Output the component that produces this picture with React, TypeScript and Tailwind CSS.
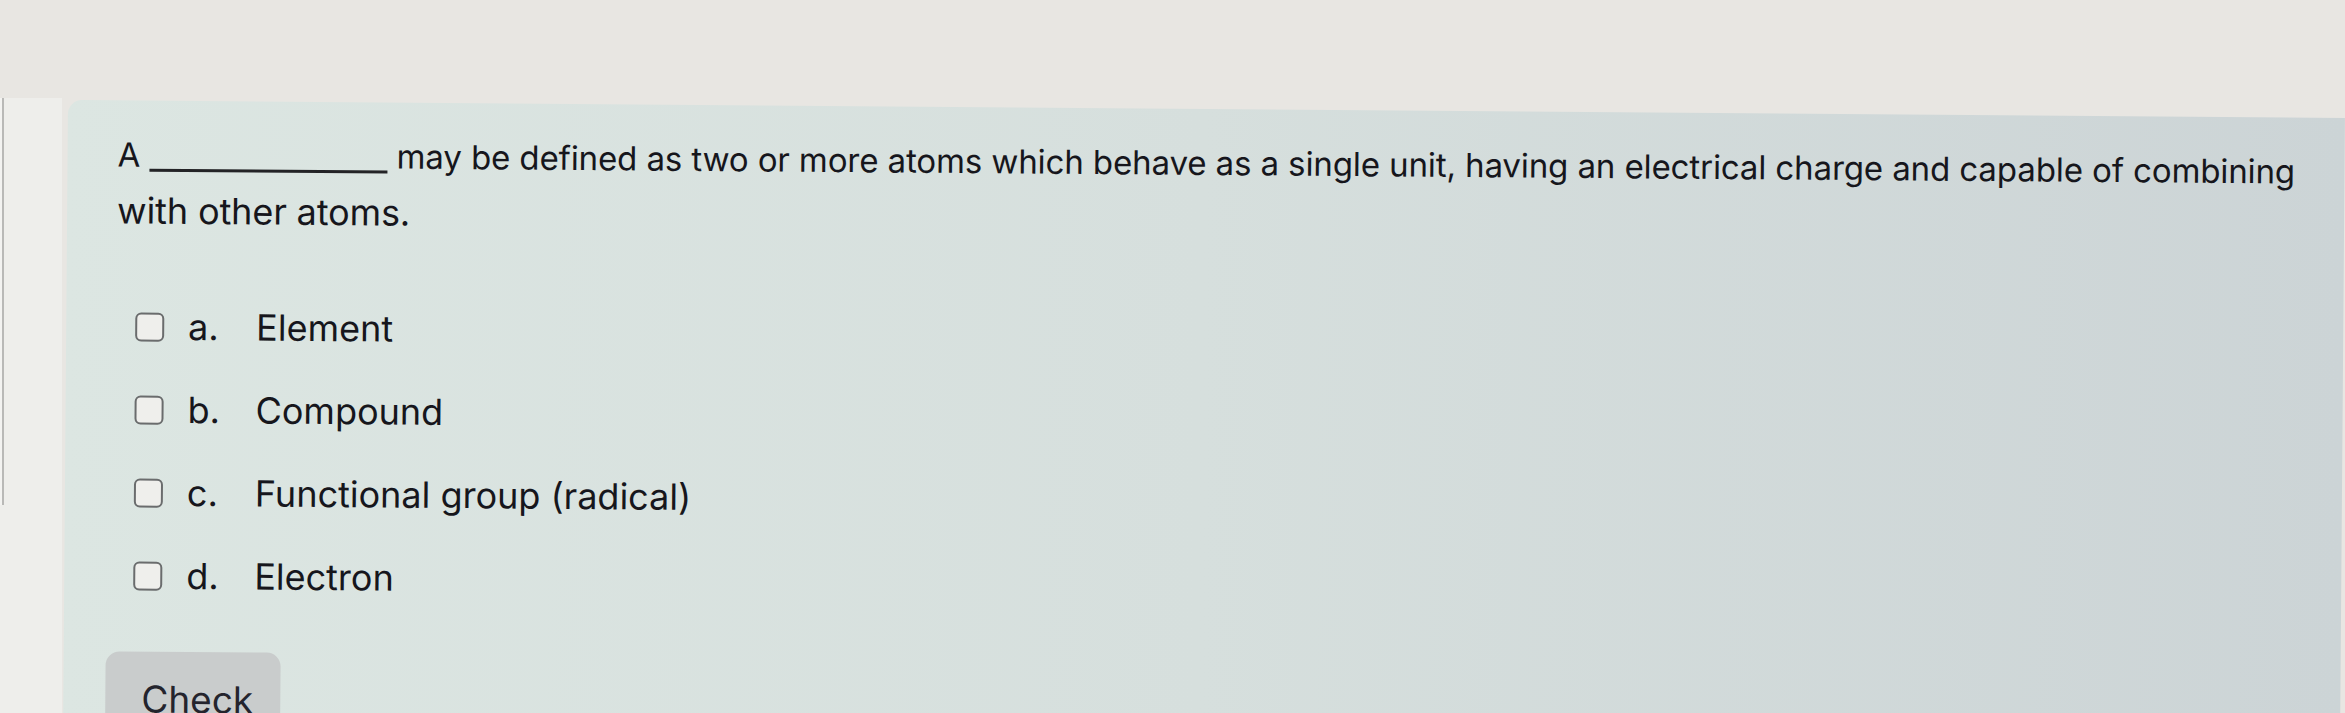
import React from 'react'

const options = [
    { key: 'a.', label: 'Element' },
    { key: 'b.', label: 'Compound' },
    { key: 'c.', label: 'Functional group (radical)' },
    { key: 'd.', label: 'Electron' },
]

function Checkbox() {
    return (
        <span className="inline-block h-[29px] w-[29px] shrink-0 rounded-[6px] border-2 border-[#6a6c6d] bg-[#efefec]"></span>
    )
}

export default function App() {
    return (
        <div
            className="relative flex h-[713px] w-[2345px] overflow-hidden bg-[#e8e6e2] text-[#16161c]"
            style={{ fontFamily: 'Inter, "Liberation Sans", Arial, sans-serif' }}
        >
            {/* left page edge */}
            <div className="mt-[98px] flex w-[62px] shrink-0 bg-[#eeeeeb]">
                <div className="h-[407px] w-[4px] border-r-2 border-[#b9b9b7] bg-[#f3f3f1]"></div>
            </div>

            {/* question card */}
            <div className="ml-[6px] mt-[100px] flex-1 origin-top-left rotate-[0.45deg] rounded-tl-[14px] bg-gradient-to-r from-[#dce6e2] via-[#d6dfdd] to-[#ccd4d6] pl-[50px] pt-[26px]">
                <p className="text-[33px] leading-[56px] tracking-[-0.1px]">
                    A <span className="inline-block w-[238px] border-b-[3px] border-[#232326] align-[-5px]"></span> may be defined as two or more atoms which behave as a single unit, having an electrical charge and capable of combining
                    <br />
                    <span className="text-[36px]">with other atoms.</span>
                </p>

                <ul className="mt-[46px]">
                    {options.map((o) => (
                        <li key={o.key} className="flex h-[83px] items-center text-[36px] leading-[83px]">
                            <span className="ml-[19px] flex items-center">
                                <Checkbox />
                            </span>
                            <span className="ml-[24px] w-[68px]">{o.key}</span>
                            <span>{o.label}</span>
                        </li>
                    ))}
                </ul>

                <button className="-ml-[8px] mt-[34px] h-[80px] w-[175px] rounded-[14px] bg-[#c9cccc] pl-[36px] pt-[16px] text-left text-[37px] leading-[30px] text-[#24242d]">
                    Check
                </button>
            </div>
        </div>
    )
}
